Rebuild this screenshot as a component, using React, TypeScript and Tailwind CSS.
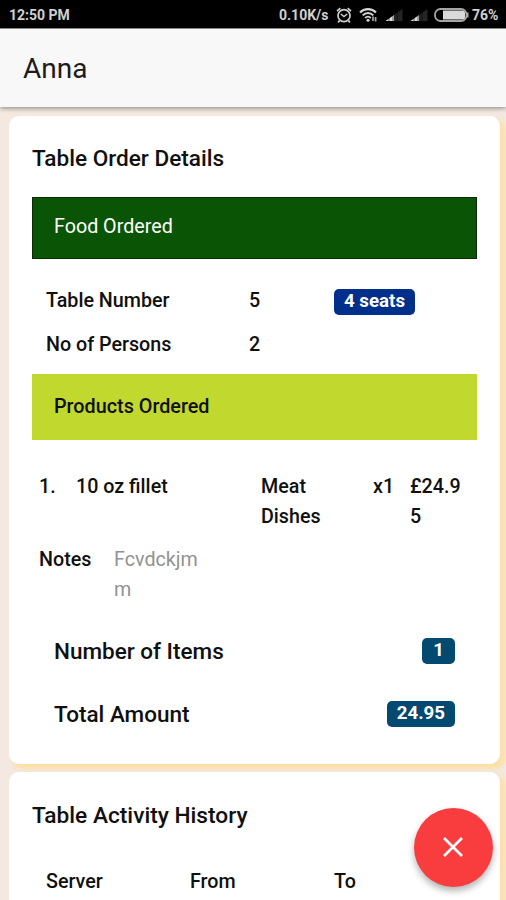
import React from "react";

const tableInfo = [
  { label: "Table Number", value: "5", badge: "4 seats" },
  { label: "No of Persons", value: "2", badge: "" },
];

const totals = [
  { label: "Number of Items", value: "1" },
  { label: "Total Amount", value: "24.95" },
];

const SignalIcon = () => (
  <svg className="w-[18px] h-[14px]" viewBox="0 0 18 14">
    <path d="M9 7L17.5 1V13H9Z" fill="#252525" />
    <path d="M0.5 13L9 7V13Z" fill="#dedede" />
    <path d="M4 8V13M8 5V13M12 3V13" stroke="#000" strokeWidth="0.6" />
  </svg>
);

const StatusBar = () => (
  <div className="flex h-[28px] shrink-0 items-center bg-black pl-[9px] pr-[7px] pt-[2px] text-[14px] font-bold text-[#d0d0d0]">
    <span className="w-[62px] whitespace-nowrap">12:50 PM</span>
    <span className="ml-auto w-[51px] whitespace-nowrap">0.10K/s</span>
    <svg className="ml-[6px] h-[17px] w-[16px]" viewBox="0 0 16 17" fill="none" stroke="#cfcfcf">
      <circle cx="8" cy="8.7" r="6" strokeWidth="1.7" />
      <path d="M1 4.2L4.3 1.2M15 4.2L11.7 1.2M3.5 13.5L2.2 15.5M12.5 13.5L13.8 15.5" strokeWidth="1.7" />
      <path d="M4.8 7L8 9.5L11.2 7" strokeWidth="1.5" />
    </svg>
    <svg className="ml-[7px] h-[16px] w-[19px]" viewBox="0 0 19 16" fill="none" stroke="#d4d4d4">
      <path d="M1 5.6C5.5 1 12.5 1 17 5.6" strokeWidth="2.1" />
      <path d="M3.7 8.4C6.8 5.2 11.2 5.2 14.3 8.4" strokeWidth="2" />
      <path d="M6.2 11C8 9.2 10 9.2 11.8 11" strokeWidth="1.8" />
      <circle cx="9" cy="13.3" r="1.5" fill="#d4d4d4" stroke="none" />
      <path d="M14 9.5V14M16.6 10V14.5" stroke="#a8a8a8" strokeWidth="1.7" />
    </svg>
    <span className="ml-[7px]"><SignalIcon /></span>
    <span className="ml-[7px]"><SignalIcon /></span>
    <svg className="ml-[6px] h-[14px] w-[35px]" viewBox="0 0 35 14">
      <rect x="1" y="1" width="31.5" height="12" rx="5.5" fill="none" stroke="#a5a5a5" strokeWidth="1.8" />
      <path d="M9 2.5H28.5Q31 2.5 31 5V9Q31 11.5 28.5 11.5H9Z" fill="#d9d9d9" />
      <path d="M33.8 4.5V9.5" stroke="#b5b5b5" strokeWidth="1.4" />
    </svg>
    <span className="ml-[3px] w-[27px] whitespace-nowrap">76%</span>
  </div>
);

const Badge = ({ children, className }: { children: React.ReactNode; className: string }) => (
  <span className={`flex h-[26px] items-center justify-center rounded-[5px] text-[18.7px] font-bold text-white ${className}`}>
    {children}
  </span>
);

const App = () => {
  return (
    <div className="relative flex h-[900px] w-full flex-col overflow-hidden bg-[#f3e9e0] font-['Roboto',sans-serif] text-[#101010]">
      <StatusBar />
      <header className="z-10 flex h-[79px] shrink-0 items-center border-t border-[#888] bg-[#f8f8f8] pl-[23px] pt-px text-[28px] text-[#1c1c1c] shadow-[0_1px_5px_rgba(0,0,0,0.45)]">
        Anna
      </header>

      <main className="flex flex-col gap-2 pl-[9px] pr-[6px] pt-[9px] text-[19.7px] font-medium">
        <section className="h-[648px] shrink-0 rounded-[10px] bg-white px-[23px] pt-[27px] shadow-[4px_4px_4px_1px_#fddfa9]">
          <h2 className="h-[54px] text-[22.6px] leading-[31px]">Table Order Details</h2>
          <div className="h-[62px] border border-[#082c05] bg-[#0a5405] pl-[21px] pt-[13px] font-normal leading-[31px] text-white">
            Food Ordered
          </div>

          <div className="h-[115px] pl-[14px] pt-[20px]">
            {tableInfo.map(({ label, value, badge }) => (
              <div key={label} className="flex h-[44px] items-center">
                <span className="w-[203px]">{label}</span>
                <span className="w-[85px]">{value}</span>
                {badge && <Badge className="mt-[2px] w-[81px] bg-[#012f8c] pb-px">{badge}</Badge>}
              </div>
            ))}
          </div>

          <div className="h-[66px] bg-[#c1d82f] pl-[22px] pt-[18px] text-[19.8px] leading-[29px]">
            Products Ordered
          </div>

          <div className="flex pl-[7px] pt-[32px] leading-[29.5px]">
            <span className="w-[37px]">1.</span>
            <span className="w-[185px]">10 oz fillet</span>
            <span className="w-[112px] pr-8">Meat Dishes</span>
            <span className="w-[37px]">x1</span>
            <span className="w-[54px] break-all">£24.95</span>
          </div>

          <div className="mt-[14px] flex h-[75px] pl-[7px] leading-[30px]">
            <span className="w-[75px]">Notes</span>
            <span className="w-[88px] break-all font-normal text-[#929292]">Fcvdckjmm</span>
          </div>

          {totals.map(({ label, value }) => (
            <div key={label} className="flex h-[63px] items-center justify-between pl-[22px] pr-[22px] text-[22.5px]">
              <span>{label}</span>
              <Badge className="mb-[2px] min-w-[33px] bg-[#044970] px-[10px] pb-px">{value}</Badge>
            </div>
          ))}
        </section>

        <section className="h-[200px] shrink-0 rounded-[10px] bg-white px-[23px] pt-[28px] shadow-[4px_4px_4px_1px_#fddfa9]">
          <h2 className="h-[67px] text-[22.7px] leading-[31px]">Table Activity History</h2>
          <div className="flex pl-[14px] leading-[30px]">
            <span className="w-[144px]">Server</span>
            <span className="w-[144px]">From</span>
            <span>To</span>
          </div>
        </section>
      </main>

      <button
        aria-label="Close"
        className="absolute left-[414px] top-[808px] z-20 flex h-[79px] w-[79px] items-center justify-center rounded-full bg-[#f93c3d] pb-px pr-px shadow-[0_4px_7px_rgba(0,0,0,0.3)]">
        <svg className="h-[22px] w-[22px]" viewBox="0 0 22 22" stroke="#fff" strokeWidth="2.7">
          <path d="M2 2L20 20M20 2L2 20" />
        </svg>
      </button>
    </div>
  );
};

export default App;
